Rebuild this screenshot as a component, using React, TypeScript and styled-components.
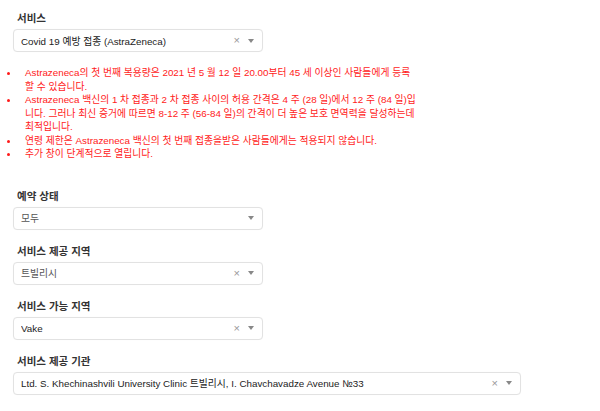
import * as React from 'react';
import styled, {createGlobalStyle} from 'styled-components';

const GlobalStyle = createGlobalStyle`
    body {
        margin: 0;
        background: #fff;
        font-family: "Liberation Sans", Arial, "Noto Sans CJK KR", sans-serif;
        color: #333;
    }
`;

const Page = styled.div`
    padding: 11px 0 0 13px;
`;

const Field = styled.div<{ wide?: boolean }>`
    width: ${(props) => props.wide ? '508px' : '250px'};
    margin-bottom: 14px;
`;

const Label = styled.div`
    font-size: 10.5px;
    font-weight: bold;
    color: #333;
    line-height: 14px;
    padding-left: 4px;
    margin-bottom: 4px;
`;

const SelectBox = styled.div`
    display: flex;
    align-items: center;
    height: 23px;
    box-sizing: border-box;
    border: 1px solid #e2e2e2;
    border-radius: 4px;
    padding: 0 8px 0 7px;
    background: #fff;
    box-shadow: 0 0 1px rgba(0, 0, 0, 0.04);
`;

const Value = styled.span<{ muted?: boolean }>`
    flex: 1;
    font-size: 9.8px;
    color: ${(props) => props.muted ? '#555' : '#222'};
    white-space: nowrap;
    overflow: hidden;
`;

const Clear = styled.span`
    font-size: 11px;
    color: #999;
    margin-right: 8px;
    line-height: 1;
`;

const Caret = styled.span`
    width: 0;
    height: 0;
    border-left: 3.5px solid transparent;
    border-right: 3.5px solid transparent;
    border-top: 4px solid #888;
`;

const Notes = styled.ul`
    list-style: none;
    margin: 12px 0 28px -13px;
    padding: 0;
    width: 416px;
`;

const Note = styled.li`
    display: flex;
    color: #ff1a1a;
    font-size: 9.8px;
    line-height: 13.5px;
`;

const Dot = styled.span`
    flex: 0 0 auto;
    width: 3px;
    height: 3px;
    border-radius: 50%;
    background: #ff1a1a;
    margin: 6px 15px 0 7px;
`;

interface SelectProps {
    label: string;
    value: string;
    clearable?: boolean;
    wide?: boolean;
    muted?: boolean;
}

function Select({label, value, clearable = true, wide, muted}: SelectProps) {
    return (
        <Field wide={wide}>
            <Label>{label}</Label>
            <SelectBox>
                <Value muted={muted}>{value}</Value>
                {clearable && <Clear>×</Clear>}
                <Caret/>
            </SelectBox>
        </Field>
    );
}

const notes = [
    'Astrazeneca의 첫 번째 복용량은 2021 년 5 월 12 일 20.00부터 45 세 이상인 사람들에게 등록할 수 있습니다.',
    'Astrazeneca 백신의 1 차 접종과 2 차 접종 사이의 허용 간격은 4 주 (28 일)에서 12 주 (84 일)입니다. 그러나 최신 증거에 따르면 8-12 주 (56-84 일)의 간격이 더 높은 보호 면역력을 달성하는데 최적입니다.',
    '연령 제한은 Astrazeneca 백신의 첫 번째 접종을받은 사람들에게는 적용되지 않습니다.',
    '추가 창이 단계적으로 열립니다.',
];

export default function App() {
    return (
        <Page>
            <GlobalStyle/>
            <Select label="서비스" value="Covid 19 예방 접종 (AstraZeneca)"/>
            <Notes>
                {notes.map((n) => (
                    <Note key={n}><Dot/><span>{n}</span></Note>
                ))}
            </Notes>
            <Select label="예약 상태" value="모두" clearable={false} muted/>
            <Select label="서비스 제공 지역" value="트빌리시" muted/>
            <Select label="서비스 가능 지역" value="Vake"/>
            <Select
                label="서비스 제공 기관"
                value="Ltd. S. Khechinashvili University Clinic 트빌리시, I. Chavchavadze Avenue №33"
                wide
            />
        </Page>
    );
}
